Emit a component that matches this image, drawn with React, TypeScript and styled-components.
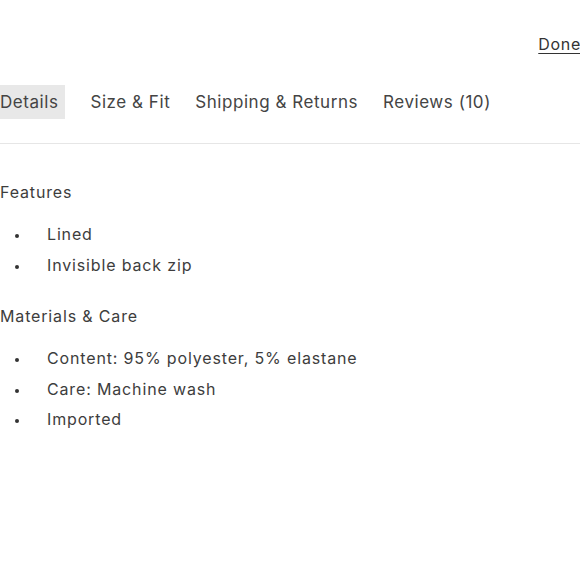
import styled, { createGlobalStyle } from "styled-components"

const Global = createGlobalStyle`
  html, body {
    margin: 0;
    padding: 0;
    background: #ffffff;
    overflow: hidden;
  }
  body {
    font-family: Inter, "Liberation Sans", sans-serif;
    color: #3d3d3d;
  }
`

const Page = styled.div`
  width: 581px;
  display: flex;
  flex-direction: column;
`

const TopBar = styled.div`
  display: flex;
  justify-content: flex-end;
  height: 74px;
  padding-top: 34px;
  box-sizing: border-box;
`

const DoneLink = styled.a`
  font-size: 16px;
  line-height: 20px;
  letter-spacing: 0.7px;
  color: #333333;
  text-decoration: underline;
  text-underline-offset: 3px;
  cursor: pointer;
`

const Tabs = styled.div`
  display: flex;
  gap: 25px;
  margin-left: -7px;
  height: 34px;
  margin-top: 11px;
`

const Tab = styled.button<{ active?: boolean }>`
  border: none;
  font-family: inherit;
  font-size: 17px;
  letter-spacing: 0.55px;
  color: #444444;
  padding: ${(p) => (p.active ? "0 7px" : "0")};
  height: 34px;
  background: ${(p) => (p.active ? "#e8e8e8" : "transparent")};
  cursor: pointer;
`

const Divider = styled.div`
  height: 1px;
  background: #e6e6e6;
  margin-top: 24px;
`

const Section = styled.div`
  display: flex;
  flex-direction: column;
`

const Heading = styled.div<{ first?: boolean }>`
  font-size: 16px;
  line-height: 20px;
  letter-spacing: 0.85px;
  color: #3d3d3d;
  margin-top: ${(p) => (p.first ? "38px" : "26px")};
`

const List = styled.ul`
  margin: 17px 0 0;
  padding: 0 0 0 47px;
  list-style: none;
`

const Item = styled.li`
  position: relative;
  font-size: 16px;
  line-height: 30.5px;
  letter-spacing: 0.85px;
  color: #3d3d3d;
  &::before {
    content: "";
    position: absolute;
    left: -32px;
    top: 15px;
    width: 4px;
    height: 4px;
    border-radius: 50%;
    background: #333333;
  }
`

const tabs = ["Details", "Size & Fit", "Shipping & Returns", "Reviews (10)"]

const sections = [
  { title: "Features", items: ["Lined", "Invisible back zip"] },
  {
    title: "Materials & Care",
    items: ["Content: 95% polyester, 5% elastane", "Care: Machine wash", "Imported"],
  },
]

export default function App() {
  return (
    <Page>
      <Global />
      <TopBar>
        <DoneLink>Done</DoneLink>
      </TopBar>
      <Tabs>
        {tabs.map((t, i) => (
          <Tab key={t} active={i === 0}>
            {t}
          </Tab>
        ))}
      </Tabs>
      <Divider />
      {sections.map((s, i) => (
        <Section key={s.title}>
          <Heading first={i === 0}>{s.title}</Heading>
          <List>
            {s.items.map((it) => (
              <Item key={it}>{it}</Item>
            ))}
          </List>
        </Section>
      ))}
    </Page>
  )
}
